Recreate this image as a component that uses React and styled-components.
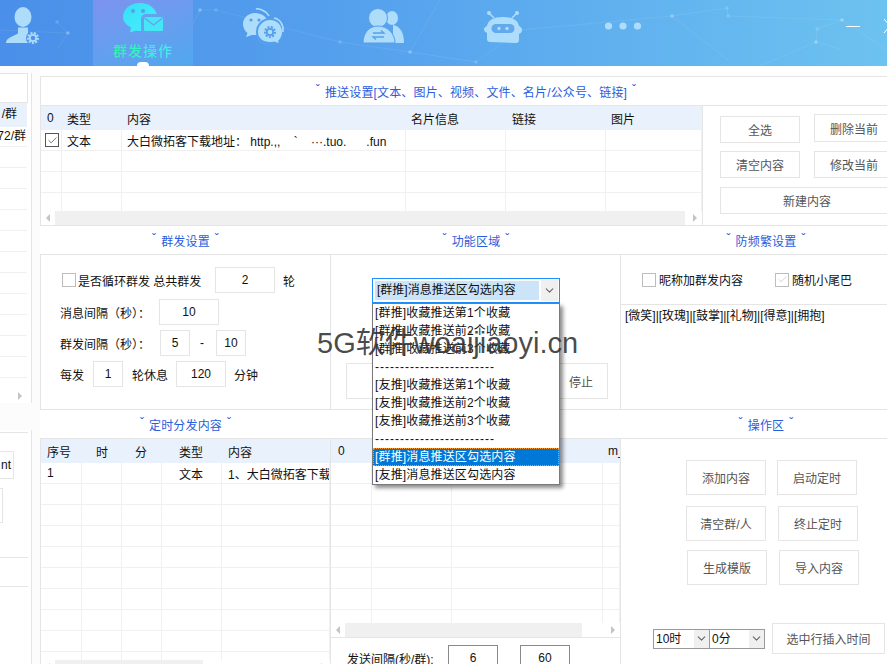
import React from 'react'
import styled, { createGlobalStyle } from 'styled-components'
import { Check, ChevronDown } from 'lucide-react'

const GlobalStyle = createGlobalStyle`
  * { box-sizing: border-box; }
  html, body { margin: 0; padding: 0; background: #fcfcfc; }
  body {
    font-family: 'Liberation Sans', 'Noto Sans CJK SC', sans-serif;
    font-size: 12px;
    color: #111;
  }
`

const Shell = styled.div`
  position: relative;
  width: 887px;
  height: 664px;
  overflow: hidden;
  background: #fcfcfc;
`

/* header */
const Header = styled.header`
  position: relative;
  display: flex;
  height: 66px;
  background: linear-gradient(90deg, #4a8fe9 0%, #57a3ee 45%, #6cc2f0 100%);
`
const Mesh = styled.svg`
  position: absolute;
  inset: 0;
`
const Nav = styled.nav`
  position: relative;
  display: flex;
  gap: 20px;
  margin-left: -27px;
`
const NavItem = styled.div`
  position: relative;
  display: flex;
  flex-direction: column;
  align-items: center;
  width: 100px;
  height: 66px;
  background: ${(p) => (p.$active ? 'linear-gradient(160deg, #7d93ee 0%, #50a8ee 100%)' : 'transparent')};

  svg { display: block; flex: none; }

  ${(p) =>
    p.$active &&
    `&::after {
      content: '';
      position: absolute;
      left: 44px;
      bottom: 0;
      width: 12px;
      height: 4px;
      background: #fff;
      border-radius: 6px 6px 0 0;
    }`}
`
const NavLabel = styled.div`
  font-size: 14px;
  font-weight: 500;
  letter-spacing: 1px;
  line-height: 16px;
  margin-top: -9px;
  background: linear-gradient(90deg, #2ff5a8, #46ecf4);
  -webkit-background-clip: text;
  background-clip: text;
  color: transparent;
`
const WindowControls = styled.div`
  position: relative;
  display: flex;
  flex: none;
  align-items: flex-start;
  gap: 23px;
  margin-left: auto;
  margin-right: -10px;
  padding-top: 19px;

  svg { display: block; }
`

/* page layout */
const Body = styled.div`
  display: flex;
  height: 598px;
`
const Sidebar = styled.aside`
  flex: 0 0 40px;
  display: flex;
  flex-direction: column;
  padding-top: 7px;
`
const SidePart = styled.div`
  width: 32px;
  height: ${(p) => p.$h}px;
  margin-bottom: ${(p) => p.$after || 0}px;
  flex: none;
  background: #fff;
  border-right: 1px solid #e5e5e5;
  overflow: hidden;
`
const SideHead = styled.div`
  width: 28px;
  height: 30px;
  border-top: 1px solid #e5e5e5;
  border-right: 1px solid #e5e5e5;
  border-bottom: 1px solid #e5e5e5;
`
const SideRow = styled.div`
  display: flex;
  justify-content: flex-end;
  width: 27px;
  height: ${(p) => p.$h || 21}px;
  padding-right: ${(p) => p.$pr || 0}px;
  line-height: ${(p) => (p.$h || 21) - 1}px;
  background: ${(p) => (p.$selected ? '#e9f1fd' : '#fff')};
  border-bottom: 1px solid ${(p) => (p.$selected ? '#e9f1fd' : '#f0f0f0')};
  white-space: nowrap;
  overflow: hidden;
`
const SideScroll = styled.div`
  width: 27px;
  height: 14px;
  margin-top: 11px;
  background: #fff;
  padding: 3px 0 0 18px;
`
const SideLine = styled.div`
  width: 28px;
  height: 1px;
  margin-top: ${(p) => p.$top}px;
  background: #e5e5e5;
`
const SideButton = styled.div`
  width: ${(p) => p.$w}px;
  height: ${(p) => p.$h}px;
  margin-top: ${(p) => p.$top}px;
  border: 1px solid #e5e5e5;
  border-left: 0;
  background: #fff;
  line-height: ${(p) => p.$h - 2}px;
  text-align: right;
  padding-right: 2px;
`
const Main = styled.main`
  flex: 0 0 871px;
  padding-top: 10px;
  background: #fff;
`
const PushSection = styled.section`
  border: 1px solid #e5e5e5;
  border-right: 0;
  background: #fff;
`
const SectionTitle = styled.div`
  height: ${(p) => p.$h || 28}px;
  display: flex;
  align-items: center;
  justify-content: center;
  gap: 5px;
  padding-top: 3px;
  color: #2a5cdd;
  letter-spacing: 0.15px;
  white-space: nowrap;
  line-height: 14px;
  border-bottom: ${(p) => (p.$underline ? '1px solid #e5e5e5' : '0')};

  &::before, &::after {
    content: 'ˇ';
    font-size: 12px;
    margin-top: -6px;
  }
`
const PushBody = styled.div`
  display: flex;
  height: 119px;
`
const Columns = styled.div`
  display: flex;
  height: ${(p) => p.$h}px;
`
const Column = styled.div`
  flex: 0 0 ${(p) => p.$w || 290}px;
  display: flex;
  flex-direction: column;
`
const Panel = styled.div`
  position: relative;
  height: 156px;
  background: #fff;
  border-top: 1px solid #e5e5e5;
  border-bottom: 1px solid #e5e5e5;
  border-right: 1px solid ${(p) => (p.$last ? 'transparent' : '#e5e5e5')};
  border-left: ${(p) => (p.$first ? '1px solid #e5e5e5' : '0')};
`

/* grids */
const GridBox = styled.div`
  display: flex;
  flex-direction: column;
  flex: ${(p) => (p.$w ? `0 0 ${p.$w}px` : '1 1 auto')};
  min-height: 0;
  overflow: hidden;
  background: #fff;
`
const GridBody = styled.div`
  flex: 1 1 0;
  min-height: 0;
  overflow: hidden;
`
const GridRow = styled.div`
  display: grid;
  grid-template-columns: ${(p) => p.$cols};
  height: ${(p) => (p.$head ? 24 : 21)}px;
  background: ${(p) => (p.$head ? '#e9f1fd' : '#fff')};
  border-bottom: ${(p) => (p.$head ? '0' : '1px solid #f0f0f0')};
`
const Cell = styled.div`
  display: flex;
  align-items: center;
  padding-left: ${(p) => p.$pad}px;
  white-space: pre;
  overflow: hidden;
  border-right: ${(p) => (p.$head ? '0' : '1px solid #f0f0f0')};
`
const ScrollBar = styled.div`
  flex: 0 0 14px;
  display: flex;
  align-items: center;
  padding: 0 5px;
  background: #fff;
`
const ScrollThumb = styled.div`
  height: 14px;
  margin-left: ${(p) => p.$left}px;
  width: ${(p) => p.$w}px;
  background: #f0f0f0;
`
const Arrow = styled.span`
  flex: none;
  display: block;
  width: 0;
  height: 0;
  margin-left: ${(p) => (p.$push ? 'auto' : '0')};
  border-top: 4px solid transparent;
  border-bottom: 4px solid transparent;
  ${(p) => (p.$dir === 'left' ? 'border-right: 4px solid #c4c4c4;' : 'border-left: 4px solid #c4c4c4;')}
`

/* buttons and inputs */
const Button = styled.div`
  display: flex;
  align-items: center;
  justify-content: center;
  flex: none;
  width: ${(p) => p.$w || 80}px;
  height: ${(p) => p.$h || 27}px;
  background: #fff;
  border: 1px solid #e5e5e5;
  color: #555;
  white-space: nowrap;
`
const PushActions = styled.div`
  flex: 1;
  display: grid;
  grid-template-columns: 80px 80px;
  grid-template-rows: 29px 27px 27px;
  column-gap: 14px;
  row-gap: 8px;
  align-items: start;
  align-content: start;
  padding: 8px 0 0 17px;
  border-left: 1px solid #e5e5e5;
`
const LowerButton = styled(Button)`
  margin-top: 2px;
`
const WideCell = styled(Button)`
  grid-column: span 2;
  width: 174px;
  margin-top: 1px;
`
const Field = styled.input`
  flex: none;
  width: ${(p) => p.$w}px;
  height: 26px;
  padding: 0;
  text-align: center;
  font: inherit;
  color: #111;
  background: #fff;
  border: 1px solid ${(p) => (p.$dark ? '#8a8a8a' : '#e5e5e5')};
  outline: none;
`
const Label = styled.span`
  flex: none;
  width: ${(p) => (p.$w ? `${p.$w}px` : 'auto')};
  white-space: nowrap;
  margin-left: ${(p) => p.$ml || 0}px;
`
const CheckBox = styled.span`
  flex: none;
  display: inline-flex;
  align-items: center;
  justify-content: center;
  width: 14px;
  height: 14px;
  margin-left: ${(p) => p.$ml || 0}px;
  background: #fff;
  border: 1px solid ${(p) => (p.$dark ? '#555' : '#bdbdbd')};
  color: ${(p) => (p.$dark ? '#444' : '#c4c4c4')};
`

/* group send form */
const Form = styled.div`
  display: flex;
  flex-direction: column;
  gap: 5px;
  padding: 12px 0 0 19px;
`
const FormRow = styled.div`
  display: flex;
  align-items: center;
  height: 26px;
  margin-bottom: ${(p) => p.$after || 0}px;
`

/* function area */
const FunctionArea = styled.div`
  padding: 23px 0 0 41px;
`
const SelectWrap = styled.div`
  position: relative;
  z-index: 2;
  width: 188px;
`
const SelectBox = styled.div`
  display: flex;
  height: 25px;
  padding: 1px;
  background: #fff;
  border: 1px solid #1e90ff;
`
const SelectValue = styled.div`
  flex: 1;
  margin: 1px 2px 1px 1px;
  padding-left: 2px;
  line-height: 19px;
  background: #cce4f7;
`
const SelectArrow = styled.div`
  flex: 0 0 ${(p) => p.$w || 17}px;
  display: flex;
  align-items: center;
  justify-content: center;
  background: #f0f0f0;
  color: #666;
`
const Dropdown = styled.div`
  position: absolute;
  top: 25px;
  left: 0;
  width: 188px;
  background: #fff;
  border: 1px solid #7a7a7a;
  box-shadow: 3px 3px 4px rgba(0, 0, 0, 0.45);
`
const DropItem = styled.div`
  height: 18px;
  line-height: 18px;
  padding-left: 2px;
  white-space: nowrap;
  overflow: hidden;
  letter-spacing: ${(p) => (p.$sep ? '1px' : '0.15px')};
  background: ${(p) => (p.$active ? '#0078d7' : '#fff')};
  color: ${(p) => (p.$active ? '#fff' : '#111')};
  outline: ${(p) => (p.$active ? '1px dotted #ff9a2e' : '0')};
  outline-offset: -1px;
`
const RunRow = styled.div`
  position: absolute;
  left: 15px;
  top: 108px;
  display: flex;
  gap: 16px;
`

/* anti-frequency */
const OptionRow = styled.div`
  display: flex;
  align-items: center;
  height: 50px;
  border-bottom: 1px solid #e5e5e5;
`
const Tails = styled.div`
  padding: 4px 0 0 4px;
  line-height: 14px;
  white-space: nowrap;
`

/* bottom row */
const ScheduleGrid = styled.div`
  display: flex;
  flex-direction: column;
  height: 236px;
  border-top: 1px solid #e5e5e5;
  border-left: 1px solid #e5e5e5;
  border-right: 1px solid #e5e5e5;
`
const SendColumn = styled.div`
  display: flex;
  flex-direction: column;
  height: 236px;
  border-top: 1px solid #e5e5e5;
  border-right: 1px solid #e5e5e5;
`
const GridStack = styled.div`
  flex: 0 0 198px;
  display: flex;
  min-height: 0;
`
const SendFooter = styled.div`
  display: flex;
  align-items: flex-start;
  flex: 1;
  padding: 7px 0 0 16px;
  background: #fff;
  border-top: 1px solid #e5e5e5;
`
const SendLabel = styled.span`
  flex: none;
  width: 101px;
  padding-top: 5px;
`
const OpsPanel = styled.div`
  height: 236px;
  padding-top: 21px;
  background: #fff;
  border-top: 1px solid #e5e5e5;
`
const OpsRow = styled.div`
  display: flex;
  gap: ${(p) => p.$gap}px;
  padding-left: ${(p) => p.$left}px;
  margin-bottom: ${(p) => p.$after}px;
`
const TimeRow = styled.div`
  display: flex;
  align-items: center;
  margin-top: 38px;
  padding-left: 32px;
`
const TimeSelects = styled.div`
  display: flex;
  height: 20px;
  border: 1px solid #999;
  margin-right: 7px;
`
const TimeSelect = styled.div`
  display: flex;
  width: 55px;
  line-height: 18px;
  padding-left: 2px;
  background: #fff;
  border-left: ${(p) => (p.$divided ? '1px solid #999' : '0')};

  span { flex: 1; }
`
const Watermark = styled.div`
  position: absolute;
  z-index: 5;
  left: 317px;
  top: 325px;
  font-size: 29px;
  line-height: 36px;
  color: rgba(50, 50, 50, 0.88);
  white-space: nowrap;
  pointer-events: none;
`

const PUSH_COLS = '21px 60px 284px 100px 100px 96px'
const SCHEDULE_COLS = '41px 40px 40px 60px 108px'
const SEND_COLS = '41px 80px 151px 17px'

const SEPARATOR = '------------------------'
const dropItems = [
  '[群推]收藏推送第1个收藏',
  '[群推]收藏推送前2个收藏',
  '[群推]收藏推送前3个收藏',
  SEPARATOR,
  '[友推]收藏推送第1个收藏',
  '[友推]收藏推送前2个收藏',
  '[友推]收藏推送前3个收藏',
  SEPARATOR,
  '[群推]消息推送区勾选内容',
  '[友推]消息推送区勾选内容',
]

const NETWORK = [
  [57, 22, 68, 33], [68, 33, 58, 48], [200, 10, 216, 10], [216, 10, 340, 42], [340, 42, 410, 52],
  [410, 52, 476, 62], [476, 62, 520, 30], [520, 30, 672, 16], [672, 16, 727, 8], [727, 8, 728, 16],
  [728, 16, 842, 20], [842, 20, 817, 29], [817, 29, 816, 42], [816, 42, 840, 49], [672, 16, 728, 60],
  [200, 10, 180, 50], [68, 33, 0, 30], [410, 52, 440, 0], [842, 20, 887, 50], [816, 42, 760, 66],
]

function HeaderMesh() {
  return (
    <Mesh width="887" height="66" viewBox="0 0 887 66">
      {NETWORK.map(([x1, y1, x2, y2], i) => (
        <g key={i}>
          <line x1={x1} y1={y1} x2={x2} y2={y2} stroke="#fff" strokeOpacity="0.08" />
          <circle cx={x1} cy={y1} r="1.8" fill="#fff" fillOpacity="0.16" />
        </g>
      ))}
    </Mesh>
  )
}

function GearMark({ x, y, color, cut }) {
  return (
    <g>
      <circle cx={x} cy={y} r="7" fill={cut} />
      <circle cx={x} cy={y} r="5" fill="none" stroke={color} strokeWidth="2" strokeDasharray="2 1.4" />
      <circle cx={x} cy={y} r="3.2" fill="none" stroke={color} strokeWidth="1.8" />
    </g>
  )
}

const PALE = '#aedcfb'

function UserIcon() {
  return (
    <svg width="60" height="52" viewBox="0 0 60 52">
      <ellipse cx="30" cy="17" rx="8.5" ry="10" fill={PALE} />
      <path d="M13 43c0-2 1-4 4-5.500l8-4v-6h10v6l5 2.500v7z" fill={PALE} />
      <GearMark x="40" y="38" color={PALE} cut="#4e93ea" />
    </svg>
  )
}

function MailChatIcon() {
  return (
    <svg width="60" height="52" viewBox="0 0 60 52">
      <defs>
        <linearGradient id="chatFill" x1="0" y1="0" x2="1" y2="1">
          <stop offset="0" stopColor="#37dff5" />
          <stop offset="1" stopColor="#47f0ff" />
        </linearGradient>
      </defs>
      <path d="M27 3c9.500 0 17 6 17 14 0 8-7.500 14-17 14-1.500 0-3 0-4-.5l-6 2 1-5C13 25 10 21 10 17 10 9 17.500 3 27 3z" fill="url(#chatFill)" />
      <circle cx="20" cy="11" r="2" fill="#5a9dec" />
      <circle cx="30" cy="11" r="2" fill="#5a9dec" />
      <rect x="28" y="14" width="25" height="20" rx="5" fill="#63a2ec" />
      <rect x="31" y="17" width="19" height="14" rx="1.500" fill="#47e6f6" />
      <path d="M31.500 18l9 7 9-7" fill="none" stroke="#63a2ec" strokeWidth="1.300" />
    </svg>
  )
}

function ChatGearIcon() {
  return (
    <svg width="60" height="52" viewBox="0 0 60 52">
      <path d="M23 9c1-.5 9 0 13 7" fill="none" stroke={PALE} strokeWidth="1.500" />
      <path d="M22 13c8 0 13 5 13 11 0 6-6 11-13 11h-3l-6 2 1.500-4C11.500 31 10 27.500 10 24c0-6 5-11 12-11z" fill={PALE} />
      <circle cx="18" cy="20" r="1.600" fill="#55a0ec" />
      <circle cx="26" cy="20" r="1.600" fill="#55a0ec" />
      <circle cx="37" cy="32" r="14" fill="#55a0ec" />
      <path d="M37 20c7 0 12 5.500 12 12 0 4-2 7-4 9l1 2-5-1.500c-1 .5-2.500.5-4 .5-7 0-12-4-12-10s5-12 12-12z" fill={PALE} />
      <path d="M41 18c6 1 10 7 9 14" fill="none" stroke={PALE} strokeWidth="1.500" />
      <GearMark x="37" y="32" color="#55a0ec" cut={PALE} />
    </svg>
  )
}

function SwapUsersIcon() {
  return (
    <svg width="60" height="52" viewBox="0 0 60 52">
      <ellipse cx="39" cy="18" rx="6" ry="7" fill={PALE} />
      <path d="M40 25c6 1 11 6 11 18H40z" fill={PALE} />
      <circle cx="25" cy="18" r="9.500" fill={PALE} stroke="#56a0ec" strokeWidth="1" />
      <path d="M10 43c0-10 6-17 15-17s17 7 17 17z" fill={PALE} stroke="#56a0ec" strokeWidth="1" />
      <path d="M20 33h11l-3-2.500M31 37H20l3 2.500" fill="none" stroke="#56a0ec" strokeWidth="1.300" />
    </svg>
  )
}

function RobotIcon() {
  return (
    <svg width="60" height="52" viewBox="0 0 60 52">
      <path d="M16 13l5 5M44 13l-5 5" stroke={PALE} strokeWidth="1.500" />
      <circle cx="16" cy="13" r="2" fill={PALE} />
      <circle cx="44" cy="13" r="2" fill={PALE} />
      <path d="M17 42c-2 0-3-1-3-3v-6c-2-1-3-2-3-4 0-1 1-2 3-3 1-6 7-9 16-9s15 3 16 9c2 1 3 2 3 4 0 2-1 3-3 4v6c0 2-1 3-3 3z" fill={PALE} />
      <rect x="18.500" y="24" width="23" height="9" rx="4.500" fill="#63a9ee" />
      <circle cx="26" cy="28.500" r="1.700" fill={PALE} />
      <circle cx="34" cy="28.500" r="1.700" fill={PALE} />
    </svg>
  )
}

function DotsIcon() {
  return (
    <svg width="60" height="52" viewBox="0 0 60 52">
      <circle cx="15.500" cy="26" r="3.600" fill={PALE} />
      <circle cx="30" cy="26" r="3.600" fill={PALE} />
      <circle cx="44.500" cy="26" r="3.600" fill={PALE} />
    </svg>
  )
}

function Grid({ cols, head, rows, count, pads, scroll, width }) {
  const blanks = Array.from({ length: count - rows.length }, () => head.map(() => ''))
  return (
    <GridBox $w={width}>
      <GridRow $head $cols={cols}>
        {head.map((text, i) => (
          <Cell $head $pad={pads[i]} key={i}>{text}</Cell>
        ))}
      </GridRow>
      <GridBody>
        {[...rows, ...blanks].map((row, r) => (
          <GridRow $cols={cols} key={r}>
            {row.map((content, i) => (
              <Cell $pad={pads[i]} key={i}>{content}</Cell>
            ))}
          </GridRow>
        ))}
      </GridBody>
      <ScrollBar>
        <Arrow $dir="left" />
        <ScrollThumb $left={scroll.left} $w={scroll.width} />
        <Arrow $dir="right" $push />
      </ScrollBar>
    </GridBox>
  )
}

function Chevron() {
  return <ChevronDown size={13} strokeWidth={2} />
}

export default function App() {
  return (
    <Shell>
      <GlobalStyle />
      <Header>
        <HeaderMesh />
        <Nav>
          <NavItem><UserIcon /></NavItem>
          <NavItem $active>
            <MailChatIcon />
            <NavLabel>群发操作</NavLabel>
          </NavItem>
          <NavItem><ChatGearIcon /></NavItem>
          <NavItem><SwapUsersIcon /></NavItem>
          <NavItem><RobotIcon /></NavItem>
          <NavItem><DotsIcon /></NavItem>
        </Nav>
        <WindowControls>
          <svg width="14" height="14" viewBox="0 0 14 14">
            <path d="M0 7.500h14" stroke="#fff" strokeWidth="1" />
          </svg>
          <svg width="14" height="14" viewBox="0 0 14 14">
            <path d="M1 0l12 14M13 0L1 14" stroke="#fff" strokeWidth="1" />
          </svg>
        </WindowControls>
      </Header>

      <Body>
        <Sidebar>
          <SidePart $h={330} $after={27}>
            <SideHead />
            <SideRow $selected $h={24} $pr={10}>/群</SideRow>
            <SideRow $h={20} $pr={1}>72/群</SideRow>
            {Array.from({ length: 11 }, (_, i) => <SideRow key={i} />)}
            <SideScroll><Arrow $dir="right" /></SideScroll>
          </SidePart>
          <SidePart $h={234}>
            <SideLine $top={2} />
            <SideButton $w={14} $h={28} $top={18}>nt</SideButton>
            <SideButton $w={2} $h={35} $top={9} />
            <SideLine $top={34} />
            <SideLine $top={28} />
          </SidePart>
        </Sidebar>

        <Main>
          <PushSection>
            <SectionTitle $h={29} $underline>推送设置[文本、图片、视频、文件、名片/公众号、链接]</SectionTitle>
            <PushBody>
              <Grid
                width={661}
                cols={PUSH_COLS}
                pads={[6, 5, 5, 5, 6, 5]}
                head={['0', '类型', '内容', '名片信息', '链接', '图片']}
                rows={[
                  [
                    <CheckBox $dark $ml={-2} key="c"><Check size={11} strokeWidth={1.6} /></CheckBox>,
                    '文本',
                    '大白微拓客下载地址： http.,,    `    ···.tuo.      .fun',
                    '',
                    '',
                    '',
                  ],
                ]}
                count={5}
                scroll={{ left: 5, width: 630 }}
              />
              <PushActions>
                <LowerButton>全选</LowerButton>
                <Button $h={28}>删除当前</Button>
                <Button>清空内容</Button>
                <Button>修改当前</Button>
                <WideCell>新建内容</WideCell>
              </PushActions>
            </PushBody>
          </PushSection>

          <Columns $h={184}>
            <Column $w={291}>
              <SectionTitle>群发设置</SectionTitle>
              <Panel $first>
                <Form>
                  <FormRow $after={1}>
                    <CheckBox $ml={2} />
                    <Label $w={137} $ml={2}>是否循环群发 总共群发</Label>
                    <Field readOnly value="2" $w={60} />
                    <Label $ml={8}>轮</Label>
                  </FormRow>
                  <FormRow>
                    <Label $w={99}>消息间隔（秒）：</Label>
                    <Field readOnly value="10" $w={60} />
                  </FormRow>
                  <FormRow>
                    <Label $w={100}>群发间隔（秒）：</Label>
                    <Field readOnly value="5" $w={30} />
                    <Label $w={16} $ml={10}>-</Label>
                    <Field readOnly value="10" $w={30} />
                  </FormRow>
                  <FormRow>
                    <Label $w={33}>每发</Label>
                    <Field readOnly value="1" $w={30} />
                    <Label $w={44} $ml={9}>轮休息</Label>
                    <Field readOnly value="120" $w={50} />
                    <Label $ml={8}>分钟</Label>
                  </FormRow>
                </Form>
              </Panel>
            </Column>

            <Column>
              <SectionTitle>功能区域</SectionTitle>
              <Panel>
                <FunctionArea>
                  <SelectWrap>
                    <SelectBox>
                      <SelectValue>[群推]消息推送区勾选内容</SelectValue>
                      <SelectArrow><Chevron /></SelectArrow>
                    </SelectBox>
                    <Dropdown>
                      {dropItems.map((item, i) => (
                        <DropItem $active={i === 8} $sep={item === SEPARATOR} key={i}>{item}</DropItem>
                      ))}
                    </Dropdown>
                  </SelectWrap>
                </FunctionArea>
                <RunRow>
                  <Button $w={130} $h={36} />
                  <Button $w={116} $h={36}>
                    <Label $ml={62}>停止</Label>
                  </Button>
                </RunRow>
              </Panel>
            </Column>

            <Column>
              <SectionTitle>防频繁设置</SectionTitle>
              <Panel $last>
                <OptionRow>
                  <CheckBox $ml={21} />
                  <Label $w={116} $ml={3}>昵称加群发内容</Label>
                  <CheckBox><Check size={11} strokeWidth={1.6} /></CheckBox>
                  <Label $ml={3}>随机小尾巴</Label>
                </OptionRow>
                <Tails>[微笑]|[玫瑰]|[鼓掌]|[礼物]|[得意]|[拥抱]</Tails>
              </Panel>
            </Column>
          </Columns>

          <Columns $h={265}>
            <Column $w={291}>
              <SectionTitle>定时分发内容</SectionTitle>
              <ScheduleGrid>
                <Grid
                  cols={SCHEDULE_COLS}
                  pads={[6, 14, 13, 17, 6]}
                  head={['序号', '时', '分', '类型', '内容']}
                  rows={[['1', '', '', '文本', '1、大白微拓客下载']]}
                  count={10}
                  scroll={{ left: 5, width: 148 }}
                />
              </ScheduleGrid>
            </Column>

            <Column>
              <SectionTitle />
              <SendColumn>
                <GridStack>
                  <Grid
                    cols={SEND_COLS}
                    pads={[7, 6, 6, 5]}
                    head={['0', '', '', 'm_']}
                    rows={[]}
                    count={8}
                    scroll={{ left: 5, width: 237 }}
                  />
                </GridStack>
                <SendFooter>
                  <SendLabel>发送间隔(秒/群):</SendLabel>
                  <Field readOnly value="6" $w={50} $dark />
                  <Label $w={22} />
                  <Field readOnly value="60" $w={50} $dark />
                </SendFooter>
              </SendColumn>
            </Column>

            <Column>
              <SectionTitle>操作区</SectionTitle>
              <OpsPanel>
                <OpsRow $left={65} $gap={11} $after={11}>
                  <Button $h={35}>添加内容</Button>
                  <Button $h={35}>启动定时</Button>
                </OpsRow>
                <OpsRow $left={65} $gap={12} $after={9}>
                  <Button $h={35}>清空群/人</Button>
                  <Button $h={35}>终止定时</Button>
                </OpsRow>
                <OpsRow $left={66} $gap={12} $after={0}>
                  <Button $h={35}>生成模版</Button>
                  <Button $h={35}>导入内容</Button>
                </OpsRow>
                <TimeRow>
                  <TimeSelects>
                    <TimeSelect>
                      <span>10时</span>
                      <SelectArrow $w={15}><Chevron /></SelectArrow>
                    </TimeSelect>
                    <TimeSelect $divided>
                      <span>0分</span>
                      <SelectArrow $w={15}><Chevron /></SelectArrow>
                    </TimeSelect>
                  </TimeSelects>
                  <Button $w={113} $h={31}>选中行插入时间</Button>
                </TimeRow>
              </OpsPanel>
            </Column>
          </Columns>
        </Main>
      </Body>
      <Watermark>5G软件woaijiaoyi.cn</Watermark>
    </Shell>
  )
}
